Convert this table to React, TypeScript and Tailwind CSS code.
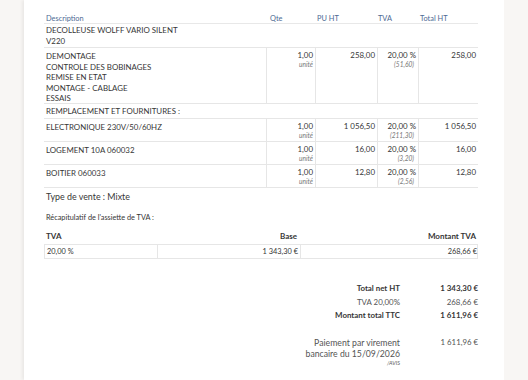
import React from 'react';

interface Line {
  label: string[];
  qty?: string;
  pu?: string;
  tva?: string;
  tvaAmount?: string;
  total?: string;
  h: string;
  pt: string;
}

const lines: Line[] = [
  { label: ['DECOLLEUSE WOLFF VARIO SILENT', 'V220'], h: 'h-[24px]', pt: 'pt-[1px]' },
  {
    label: ['DEMONTAGE', 'CONTROLE DES BOBINAGES', 'REMISE EN ETAT', 'MONTAGE - CABLAGE', 'ESSAIS'],
    qty: '1,00',
    pu: '258,00',
    tva: '20,00 %',
    tvaAmount: '(51,60)',
    total: '258,00',
    h: 'h-[56px]',
    pt: 'pt-[3px]'
  },
  { label: ['REMPLACEMENT ET FOURNITURES :'], h: 'h-[15px]', pt: 'pt-[2px]' },
  { label: ['ELECTRONIQUE 230V/50/60HZ'], qty: '1,00', pu: '1 056,50', tva: '20,00 %', tvaAmount: '(211,30)', total: '1 056,50', h: 'h-[23px]', pt: 'pt-[3px]' },
  { label: ['LOGEMENT 10A 060032'], qty: '1,00', pu: '16,00', tva: '20,00 %', tvaAmount: '(3,20)', total: '16,00', h: 'h-[23px]', pt: 'pt-[3px]' },
  { label: ['BOITIER 060033'], qty: '1,00', pu: '12,80', tva: '20,00 %', tvaAmount: '(2,56)', total: '12,80', h: 'h-[23px]', pt: 'pt-[3px]' }
];

const cols = 'grid grid-cols-[222px_49px_62px_41px_60px]';

const App: React.FC = () => {
  return (
    <div className="min-h-screen bg-[#f8f6f4] font-['Lato',sans-serif] text-[#363636]">
      <div className="ml-[24px] w-[480px] min-h-[380px] bg-white pl-[20px] pr-[26px] pt-[14px] shadow-[-2px_0_3px_rgba(0,0,0,0.06)]">
        {/* Lignes */}
        <div className={`${cols} h-[10px] border-b border-[#e8e8e8] text-[7.4px] leading-[10px] text-[#4d6a93]`}>
          <div className="pl-[2px]">Description</div>
          <div className="pl-[4px]">Qte</div>
          <div className="pl-[2px]">PU HT</div>
          <div className="pl-[1px]">TVA</div>
          <div className="pl-[2px]">Total HT</div>
        </div>

        {lines.map((l, i) => (
          <div key={i} className={`${cols} ${l.h} border-b border-[#e6e6e6] text-[7.9px] leading-[10.5px]`}>
            <div className={`pl-[2px] ${l.pt}`}>
              {l.label.map((t) => (
                <div key={t}>{t}</div>
              ))}
            </div>
            {l.qty ? (
              <>
                <div className="border-l border-[#e6e6e6] pr-[2px] pt-[2px] text-right">
                  <div>{l.qty}</div>
                  <div className="text-[6.6px] italic leading-[7px] text-[#777]">unité</div>
                </div>
                <div className="border-l border-[#e6e6e6] pr-[2px] pt-[2px] text-right">{l.pu}</div>
                <div className="border-l border-[#e6e6e6] pr-[2px] pt-[2px] text-right">
                  <div>{l.tva}</div>
                  <div className="pr-[2px] text-[6.6px] italic leading-[7px] text-[#777]">{l.tvaAmount}</div>
                </div>
                <div className="border-l border-[#e6e6e6] pr-[2px] pt-[2px] text-right">{l.total}</div>
              </>
            ) : null}
          </div>
        ))}

        <div className="mt-[3px] pl-[2px] text-[8.9px] leading-[12px]">Type de vente : Mixte</div>

        <div className="mt-[10px] pl-[2px] text-[7.3px] leading-[9px]">Récapitulatif de l'assiette de TVA :</div>

        {/* Récap TVA */}
        <div className="mt-[8px] grid grid-cols-[112px_143px_179px] text-[8px] font-bold leading-[12px]">
          <div className="pl-[2px]">TVA</div>
          <div className="pr-[2px] text-right">Base</div>
          <div className="pr-[2px] text-right">Montant TVA</div>
        </div>
        <div className="mt-[2px] grid h-[15px] grid-cols-[112px_143px_179px] border border-[#e6e6e6] text-[7.4px] leading-[13px]">
          <div className="pl-[2px]">20,00 %</div>
          <div className="border-l border-[#e6e6e6] pr-[2px] text-right">1 343,30 €</div>
          <div className="border-l border-[#e6e6e6] pr-[2px] text-right">268,66 €</div>
        </div>

        {/* Totaux */}
        <div className="mt-[23px] grid grid-cols-[356px_78px] text-[7.9px] leading-[13.5px]">
          <div className="text-right font-bold">Total net HT</div>
          <div className="text-right font-bold">1 343,30 €</div>
          <div className="text-right text-[#555]">TVA 20,00%</div>
          <div className="text-right text-[#555]">268,66 €</div>
          <div className="text-right font-bold">Montant total TTC</div>
          <div className="text-right font-bold">1 611,96 €</div>
        </div>

        <div className="mt-[14px] grid grid-cols-[356px_78px] text-[8.7px] leading-[11px] text-[#555]">
          <div className="text-right">
            <div>Paiement par virement</div>
            <div>bancaire du 15/09/2026</div>
            <div className="text-[5.5px] italic leading-[8px]">/AVIS</div>
          </div>
          <div className="text-right text-[7.8px]">1 611,96 €</div>
        </div>
      </div>
    </div>
  );
};

export default App;
